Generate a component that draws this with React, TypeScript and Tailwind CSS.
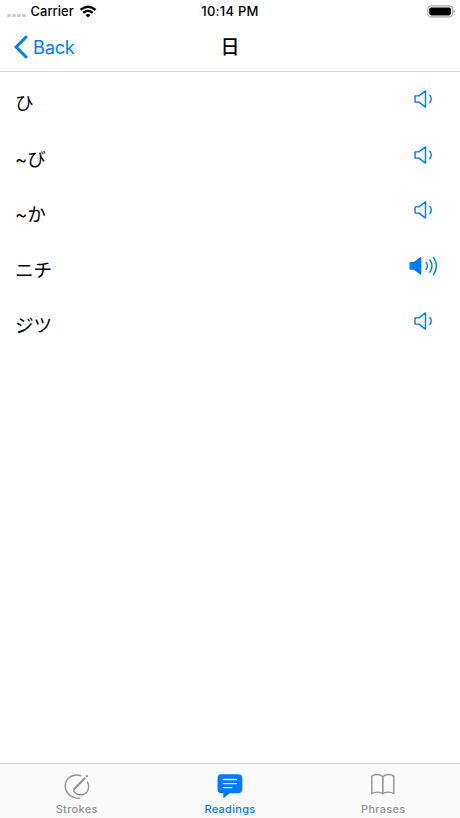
import React from "react";

const readings = [
  { text: "ひ", playing: false },
  { text: "~び", playing: false },
  { text: "~か", playing: false },
  { text: "ニチ", playing: true },
  { text: "ジツ", playing: false },
];

function Speaker({ playing }: { playing: boolean }) {
  return (
    <svg
      width="32"
      height="20"
      viewBox="0 0 32 20"
      fill="none"
      stroke="#007aff"
      strokeWidth="1.4"
      strokeLinecap="round"
      strokeLinejoin="round"
      className="-mt-px"
    >
      {playing ? (
        <>
          <path d="M2.2 6.8H5.9L12.6 1.8V18L5.9 13H2.2Z" fill="#007aff" />
          <path d="M18.1 6.6Q20.7 10 18.1 13.4M21.9 3.9Q26.1 10 21.9 16.1M25.5 1.3Q31.4 10 25.5 18.7" strokeWidth="1.45" />
        </>
      ) : (
        <>
          <path d="M7.1 6.9H10.9L17.5 1.9V18.1L10.9 13.1H7.1Z" />
          <path d="M21.9 6.4Q24.6 10 21.9 13.6" />
        </>
      )}
    </svg>
  );
}

function StrokesIcon() {
  return (
    <svg width="28" height="28" viewBox="0 0 28 28" fill="none" stroke="#929292" strokeLinecap="round">
      <path d="M17.9 2.9C11.5 0.3 2.2 4.1 2.2 13.1C2.2 19.9 8.3 25.3 16.4 25.4" strokeWidth="1.4" />
      <path d="M24.4 9.2C27.4 14.6 24.5 21.8 18 21.8C14.8 21.8 12.1 20.1 10.5 17.6" strokeWidth="1.4" />
      <path d="M11.2 16.3L21.6 5.3" strokeWidth="2.2" />
      <path d="M23.8 3.2L24 3" strokeWidth="2.2" />
    </svg>
  );
}

function ReadingsIcon() {
  return (
    <svg width="28" height="28" viewBox="0 0 28 28">
      <path d="M5.7 1.2H22.1Q26.3 1.2 26.3 5.4V16.1Q26.3 20.3 22.1 20.3H13.8L8.1 24.8Q7.3 25.3 7.3 24.4V20.3H5.7Q1.5 20.3 1.5 16.1V5.4Q1.5 1.2 5.7 1.2Z" fill="#007aff" />
      <path d="M7.2 6.5H20.5M7.2 10.6H20.5M7.2 14.6H15.8" stroke="#d7eaff" strokeWidth="1.4" strokeLinecap="round" />
    </svg>
  );
}

function PhrasesIcon() {
  return (
    <svg width="28" height="28" viewBox="0 0 28 28" fill="none" stroke="#929292" strokeWidth="1.4" strokeLinejoin="round">
      <path d="M13.8 3.6C11.2 0.9 6 0.9 2.8 3.1V20.7C6 18.6 11.1 18.6 13.8 20.7C16.5 18.6 21.6 18.6 24.8 20.7V3.1C21.6 0.9 16.4 0.9 13.8 3.6Z" />
      <path d="M13.8 3.6V20.7" strokeWidth="1.6" />
    </svg>
  );
}

const tabs = [
  { label: "Strokes", Icon: StrokesIcon, active: false },
  { label: "Readings", Icon: ReadingsIcon, active: true },
  { label: "Phrases", Icon: PhrasesIcon, active: false },
];

export default function App() {
  return (
    <div className="flex h-[818px] w-[460px] flex-col overflow-hidden bg-white font-[Inter,'Noto_Sans_CJK_JP',sans-serif] text-black">
      <header className="flex h-[72px] shrink-0 flex-col border-b border-[#d9d9d9]">
        <div className="grid h-[23px] grid-cols-3 items-center text-[13px] font-medium leading-[23px]">
          <div className="flex items-center pl-[7px]">
            <div className="mt-2 flex w-[23.5px] gap-[1.5px]">
              {[0, 1, 2, 3].map((dot) => (
                <span key={dot} className="size-[3.6px] rounded-full bg-[#cbcbcb]" />
              ))}
            </div>
            <span>Carrier</span>
            <svg width="18" height="13" viewBox="0 0 18 13" className="ml-[5px]">
              <path d="M1.4 4.9Q9 -1.6 16.6 4.9" fill="none" stroke="#000" strokeWidth="2.4" />
              <path d="M4.2 7.9Q9 4 13.8 7.9" fill="none" stroke="#000" strokeWidth="2.2" />
              <path d="M6.5 9.9Q9 7.9 11.5 9.9L9 12.4Z" />
            </svg>
          </div>
          <span className="text-center tracking-[0.25px]">10:14 PM</span>
          <div className="flex justify-end pr-[5px]">
            <svg width="28" height="13" viewBox="0 0 28 13">
              <rect x="0.8" y="0.9" width="24.6" height="11" rx="3.2" fill="none" stroke="#a6a6a6" strokeWidth="1.1" />
              <rect x="2.3" y="2.4" width="21.6" height="8" rx="1.8" />
              <path d="M26.4 4.5Q28 5 28 6.4Q28 7.8 26.4 8.3Z" fill="#a6a6a6" />
            </svg>
          </div>
        </div>
        <nav className="grid h-12 grid-cols-3 items-center">
          <button className="flex items-center gap-[5px] pl-[14px] text-[18.3px] tracking-[-0.3px] text-[#007aff]">
            <svg width="14" height="24" viewBox="0 0 14 24" fill="none" stroke="#007aff" strokeWidth="3">
              <path d="M12.8 1.3L2.2 12L12.8 22.7" />
            </svg>
            <span className="pt-px">Back</span>
          </button>
          <h1 className="-mt-[2px] text-center font-['Noto_Sans_CJK_JP',sans-serif] text-[19px] font-medium leading-6">日</h1>
        </nav>
      </header>
      <main className="flex-1">
        {readings.map(({ text, playing }) => (
          <div key={text} className="flex h-[55.5px] items-center justify-between pl-[15px] pr-5">
            <span className="pt-[7px] text-[18.6px] leading-6">{text}</span>
            <Speaker playing={playing} />
          </div>
        ))}
      </main>
      <footer className="grid h-[55px] shrink-0 grid-cols-3 border-t border-[#d3d3d3] bg-[#fafafa]">
        {tabs.map(({ label, Icon, active }) => (
          <button
            key={label}
            className={`flex flex-col items-center pt-[9px] text-[11px] font-medium leading-[14px] tracking-[0.3px] ${active ? "text-[#007aff]" : "text-[#929292]"}`}
          >
            <Icon />
            <span className="mt-px">{label}</span>
          </button>
        ))}
      </footer>
    </div>
  );
}
